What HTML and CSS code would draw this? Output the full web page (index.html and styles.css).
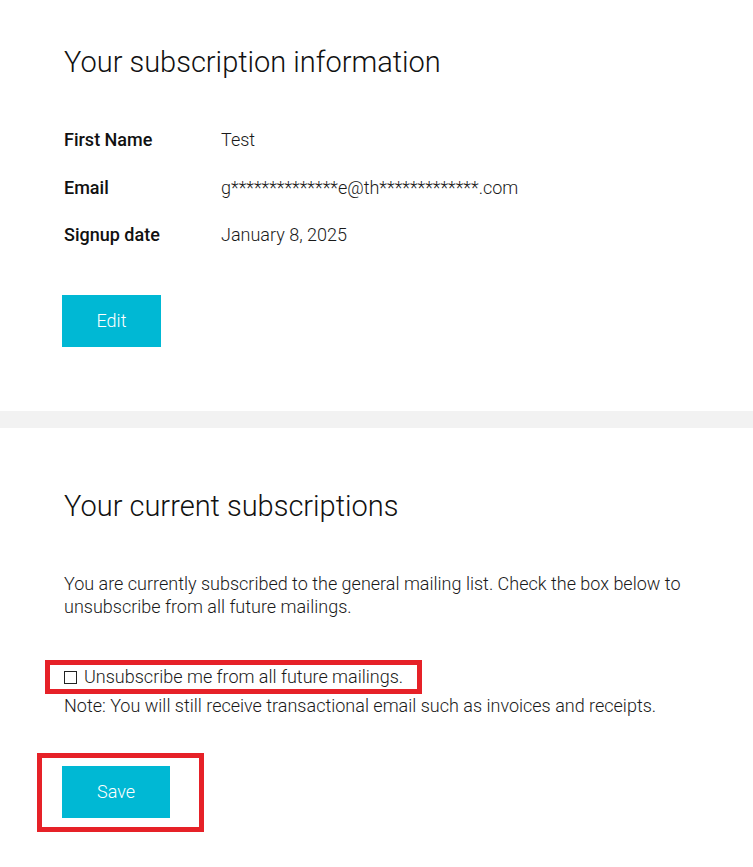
FILE: index.html
```html
<!DOCTYPE html>
<html lang="en">
<head>
    <meta charset="UTF-8">
    <meta name="viewport" content="width=device-width, initial-scale=1.0">
    <title>Manage your subscription</title>
    <link rel="stylesheet" href="styles.css">
</head>
<body>
    <div class="panel panel-info">
        <h1 class="panel-title">Your subscription information</h1>

        <div class="info-grid">
            <div class="info-label">First Name</div>
            <div class="info-value">Test</div>

            <div class="info-label">Email</div>
            <div class="info-value">g**************e@th*************.com</div>

            <div class="info-label">Signup date</div>
            <div class="info-value">January 8, 2025</div>
        </div>

        <button class="btn btn-edit">Edit</button>
    </div>

    <div class="divider"></div>

    <div class="panel panel-subs">
        <h1 class="panel-title">Your current subscriptions</h1>

        <p class="subs-text">You are currently subscribed to the general mailing list. Check the box below to unsubscribe from all future mailings.</p>

        <div class="highlight highlight-check">
            <label class="check-row">
                <input type="checkbox" class="check-box">
                <span>Unsubscribe me from all future mailings.</span>
            </label>
        </div>
        <div class="note">Note: You will still receive transactional email such as invoices and receipts.</div>

        <div class="highlight highlight-save">
            <button class="btn btn-save">Save</button>
        </div>
    </div>
</body>
</html>
```

FILE: styles.css
```css
body {
    font-family: Roboto, 'Liberation Sans', Arial, sans-serif;
    font-weight: 300;
    color: #1a1a1a;
    margin: 0;
    background: white;
}

.panel {
    padding: 0 64px;
}

.panel-info {
    padding-top: 44px;
    padding-bottom: 64px;
}

.panel-subs {
    padding-top: 60px;
}

.panel-title {
    font-size: 29px;
    font-weight: 300;
    line-height: 36px;
    color: #111;
    margin: 0;
}

.info-grid {
    display: grid;
    grid-template-columns: 157px auto;
    row-gap: 23.5px;
    margin-top: 48px;
    font-size: 18px;
    line-height: 24px;
}

.info-label {
    font-weight: 500;
    color: #111;
}

.btn {
    display: block;
    height: 52px;
    border: none;
    background: #00b8d4;
    color: white;
    font-family: inherit;
    font-weight: 300;
    font-size: 18px;
    padding: 0 0 2px;
    cursor: pointer;
}

.btn-edit {
    width: 99px;
    margin-top: 48px;
    margin-left: -2px;
}

.divider {
    height: 17px;
    background: #f2f2f2;
}

.subs-text {
    font-size: 18px;
    line-height: 23px;
    margin: 48px 0 0;
}

.highlight {
    display: inline-block;
    border: 5px solid #e62128;
}

.highlight-check {
    margin-top: 42px;
    margin-left: -19px;
    padding: 0 14px;
}

.check-row {
    display: flex;
    align-items: center;
    gap: 7px;
    font-size: 18px;
    line-height: 24px;
}

.check-box {
    appearance: none;
    width: 13px;
    height: 13px;
    margin: 0;
    border: 1px solid #222;
    background: white;
}

.note {
    font-size: 18px;
    line-height: 24px;
}

.highlight-save {
    margin-top: 35px;
    margin-left: -27px;
    padding: 8px 29px 9px 20px;
}

.btn-save {
    width: 108px;
}
```
